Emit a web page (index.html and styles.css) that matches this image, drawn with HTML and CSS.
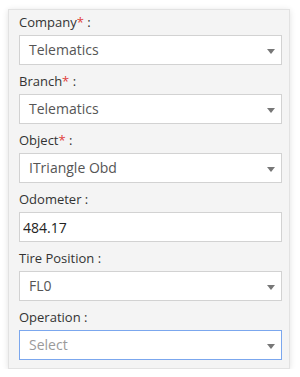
FILE: index.html
```html
<!DOCTYPE html>
<html>
<head>
    <title>Tire Operation</title>
    <link rel="stylesheet" href="styles.css">
</head>
<body>
    <div class="panel">
        <div class="field">
            <label>Company<span class="req">*</span> :</label>
            <div class="select"><span>Telematics</span></div>
        </div>
        <div class="field">
            <label>Branch<span class="req">*</span> :</label>
            <div class="select"><span>Telematics</span></div>
        </div>
        <div class="field">
            <label>Object<span class="req">*</span> :</label>
            <div class="select"><span>ITriangle Obd</span></div>
        </div>
        <div class="field">
            <label>Odometer :</label>
            <input class="text" type="text" value="484.17">
        </div>
        <div class="field">
            <label>Tire Position :</label>
            <div class="select"><span>FL0</span></div>
        </div>
        <div class="field">
            <label>Operation :</label>
            <div class="select focused"><span class="placeholder">Select</span></div>
        </div>
    </div>
</body>
</html>
```

FILE: styles.css
```css
body {
    margin: 0;
    background-color: #ffffff;
    font-family: 'Open Sans', sans-serif;
}

.panel {
    box-sizing: border-box;
    width: 282px;
    margin: 9px 0 0 8px;
    padding: 3px 7px 8px 10px;
    background-color: #f4f4f4;
    border: 1px solid #e2e2e2;
    box-shadow: 0 1px 6px rgba(0,0,0,0.12);
}

.field {
    margin-top: 7px;
}

.field:first-child {
    margin-top: 0;
}

label {
    display: block;
    font-size: 13px;
    line-height: 18px;
    color: #333;
    margin-bottom: 4px;
}

.req {
    color: #e0403a;
}

.select {
    position: relative;
    box-sizing: border-box;
    height: 30px;
    padding: 0 28px 0 9px;
    background: #ffffff;
    border: 1px solid #d2d2d2;
    font-size: 14px;
    line-height: 28px;
    color: #555;
}

/* petite flèche du menu déroulant */
.select::after {
    content: "";
    position: absolute;
    right: 6px;
    top: 13px;
    border-left: 4px solid transparent;
    border-right: 4px solid transparent;
    border-top: 5px solid #777;
}

.select.focused {
    border-color: #7ba7ee;
}

.placeholder {
    color: #9a9a9a;
}

.text {
    display: block;
    box-sizing: border-box;
    width: 100%;
    height: 30px;
    margin: 0;
    padding: 0 3px;
    background: #ffffff;
    border: 1px solid #d2d2d2;
    border-radius: 0;
    font-family: 'Open Sans', sans-serif;
    font-size: 14px;
    color: #222;
    outline: none;
}
```
